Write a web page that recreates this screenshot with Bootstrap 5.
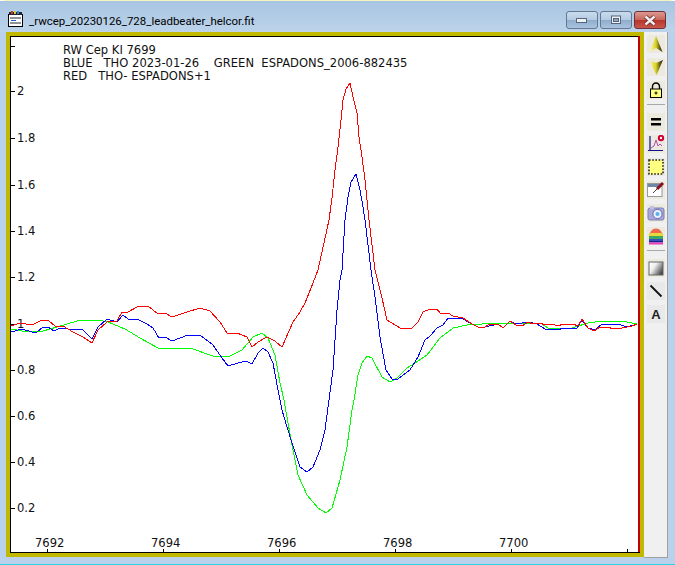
<!DOCTYPE html>
<html lang="en">
<head>
<meta charset="UTF-8">
<title>_rwcep_20230126_728_leadbeater_helcor.fit</title>
<link href="https://cdn.jsdelivr.net/npm/bootstrap@5.3.2/dist/css/bootstrap.min.css" rel="stylesheet">
<style>
html, body { width: 675px; height: 565px; margin: 0; overflow: hidden; background: #fff; }
.app-window { width: 675px; height: 565px; background: #b9d1ea; border-top: 1px solid #f5f2c0; border-bottom: 1px solid #2ad4e4; border-radius: 6px 6px 0 0; }
.title-bar { height: 31px; padding: 10px 9px 0 8px; background: linear-gradient(#a8c5e2, #bcd3ea); font: 11.45px Roboto, "Liberation Sans", sans-serif; color: #000; }
.title-bar .name { margin-left: 6px; margin-top: 3px; }
.win-btn { width: 32px; height: 18px; margin-left: 2px; border: 1px solid #66778f; border-radius: 3px; background: linear-gradient(#c9dcee 0, #b5cbe2 48%, #8fadcc 52%, #a9c4df 100%); }
.win-btn.close { background: linear-gradient(#dc9a90 0, #c9675c 48%, #b8352c 52%, #c8574c 100%); border-color: #70303a; }
.win-body { height: 524px; }
.plot-frame { width: 638px; height: 525px; margin-left: 6px; border: 4px solid #c1b800; background: #fff; }
.plot-frame svg { display: block; }
.plot-frame text { font: 11.55px "DejaVu Sans", "Liberation Sans", sans-serif; fill: #111; white-space: pre; }
.toolbar { width: 24px; height: 526px; background: #f0f0f0; border-right: 1px solid #a0a0a0; border-bottom: 1px solid #a0a0a0; padding-top: 3px; }
.tool { width: 18px; height: 18px; margin-bottom: 5px; background: #ece9de; }
.tool.plain { background: #e9e9e9; }
.tool.tight { margin-bottom: 4px; }
.tool svg { display: block; }
.tool-sep { width: 18px; height: 1px; background: #a8a8a8; margin-bottom: 8px; }
</style>
</head>
<body>
<div class="app-window">
  <div class="title-bar d-flex align-items-start">
    <svg width="15" height="16" viewBox="0 0 15 16">
      <rect x=".5" y="3.5" width="14" height="12" fill="#fff" stroke="#000"/>
      <rect x="1" y="1" width="13" height="3" fill="#223"/>
      <rect x="3" y="0" width="2" height="3" fill="#c33"/><rect x="6" y="0" width="2" height="3" fill="#cc3"/><rect x="9" y="0" width="2" height="3" fill="#38c"/>
      <path d="M2 7h11M2 12h11" stroke="#223"/><path d="M3 9.5h5" stroke="#26c"/>
    </svg>
    <div class="name flex-grow-1">_rwcep_20230126_728_leadbeater_helcor.fit</div>
    <div class="win-btn d-flex align-items-center justify-content-center"><svg width="12" height="6" viewBox="0 0 12 6"><rect x=".5" y="1.5" width="10" height="4" fill="#eef1f5" stroke="#56657a"/></svg></div>
    <div class="win-btn d-flex align-items-center justify-content-center"><svg width="12" height="10" viewBox="0 0 12 10"><rect x="1.5" y="1" width="9" height="7.5" fill="#eef1f5" stroke="#56657a"/><rect x="3.5" y="3.5" width="5" height="3" fill="#8fa6c0" stroke="#56657a"/></svg></div>
    <div class="win-btn close d-flex align-items-center justify-content-center"><svg width="14" height="11" viewBox="0 0 14 11"><path d="M2.5 1.5l9 8M11.5 1.5l-9 8" stroke="#5b2a2a" stroke-width="4"/><path d="M2.5 1.5l9 8M11.5 1.5l-9 8" stroke="#f4eeee" stroke-width="2.4"/></svg></div>
  </div>
  <div class="win-body d-flex">
    <div class="plot-frame">
      <svg width="630" height="517" viewBox="10 36 630 517">
        <path d="M10.5 36V553M10 552.5H640" stroke="#000" fill="none" shape-rendering="crispEdges" stroke-width="1.5"/>
        <path d="M10 36.5H639" stroke="#000" shape-rendering="crispEdges"/>
        <path d="M638.5 36V552" stroke="#c00000" stroke-width="2" shape-rendering="crispEdges"/>
        <path d="M11 46.5h4M11 91.5h4M11 138.5h4M11 185.5h4M11 231.5h4M11 277.5h4M11 324.5h4M11 370.5h4M11 416.5h4M11 462.5h4M11 508.5h4M47.5 549v4M163.5 549v4M279.5 549v4M395.5 549v4M511.5 549v4M627.5 549v4" stroke="#000" shape-rendering="crispEdges"/>
        <text x="63" y="54">RW Cep KI 7699</text>
        <text x="63" y="67">BLUE   THO 2023-01-26    GREEN  ESPADONS_2006-882435</text>
        <text x="63" y="80">RED   THO- ESPADONS+1</text>
        <text x="17" y="95">2</text><text x="17" y="142">1.8</text><text x="17" y="189">1.6</text><text x="17" y="235">1.4</text><text x="17" y="281">1.2</text><text x="17" y="328">1</text><text x="17" y="374">0.8</text><text x="17" y="420">0.6</text><text x="17" y="466">0.4</text><text x="17" y="512">0.2</text>
        <text x="35" y="547">7692</text><text x="151" y="547">7694</text><text x="267" y="547">7696</text><text x="383" y="547">7698</text><text x="499" y="547">7700</text>
        <g fill="none" shape-rendering="crispEdges">
          <polyline stroke="#00ff00" points="11,329 28,332 43,331 57,327 77,321 98,320 108,322 125,329 140,338 158,348 190,348 213,356 230,356 242,350 253,337 262,333 268,338 275,355 280,383 284,400 288,423 293,450 298,475 307,495 318,508 326,513 332,508 340,480 347,447 352,410 354,400 358,375 362,363 367,356 372,358 382,377 390,382 397,378 407,368 418,361 427,355 440,338 453,328 467,325 498,323 530,323 542,324 548,328 572,328 588,323 602,321 622,321 637,324"/>
          <polyline stroke="#0000ff" points="11,332 22,329 32,332 37,332 43,327 48,327 54,331 60,328 68,329 83,330 92,339 98,327 107,319 117,322 123,315 128,319 137,319 147,324 153,328 159,338 165,337 172,341 180,338 188,335 200,335 213,345 222,358 228,366 238,363 246,361 252,364 258,353 263,348 268,352 273,363 278,390 282,410 287,427 292,443 297,458 300,467 307,472 313,467 320,450 325,430 329,400 333,370 337,310 340,280 342,270 345,220 348,197 351,182 356,174 360,190 363,207 365,220 371,270 375,297 380,337 386,370 392,379 398,379 410,370 418,357 425,340 430,336 437,328 443,325 448,318 463,319 472,324 478,327 485,327 498,324 503,328 510,321 516,324 522,323 528,322 537,324 545,329 558,330 563,328 577,328 582,320 588,328 595,330 602,324 618,324 627,327 637,324"/>
          <polyline stroke="#ff0000" points="11,326 20,323 32,325 42,320 48,320 55,326 63,326 73,332 83,337 92,343 98,330 107,322 117,321 122,312 128,312 137,307 148,306 158,314 165,313 172,317 187,312 200,308 210,311 220,322 227,333 237,333 247,337 252,347 258,342 267,337 275,341 282,347 293,322 300,312 305,303 313,283 318,270 329,220 332,198 335,170 338,147 341,120 343,100 346,89 350,83 353,97 357,113 359,137 362,157 365,180 369,220 375,270 382,298 387,320 400,328 412,328 418,322 423,312 430,309 437,309 440,313 448,313 453,316 463,318 472,324 478,327 485,327 490,324 498,324 503,328 510,321 516,325 522,326 528,322 533,324 540,323 545,325 552,324 558,326 563,324 573,324 578,326 582,319 588,328 594,331 600,327 608,327 613,329 622,328 627,327 632,326 637,324"/>
        </g>
      </svg>
    </div>
    <div class="toolbar d-flex flex-column align-items-center">
      <div class="tool"><svg width="18" height="18" viewBox="0 0 18 18"><defs><linearGradient id="gold" x1="0" x2="1" y1="0" y2="0"><stop offset="0" stop-color="#fffcc0"/><stop offset=".5" stop-color="#d8d020"/><stop offset=".8" stop-color="#5a5210"/><stop offset="1" stop-color="#26240a"/></linearGradient></defs><path d="M9 1L15.5 17 9 13 2.5 17Z" fill="url(#gold)"/></svg></div>
      <div class="tool"><svg width="18" height="18" viewBox="0 0 18 18"><path d="M2 2L9 5 16 2 9.5 17Z" fill="url(#gold)"/></svg></div>
      <div class="tool"><svg width="18" height="18" viewBox="0 0 18 18"><path d="M5.5 8V5.5a3.5 3.5 0 0 1 7 0V8" fill="none" stroke="#000" stroke-width="1.4"/><rect x="3.5" y="8" width="11" height="8.5" fill="#ffff80" stroke="#000"/><path d="M9 10.5v3M7.5 12h3" stroke="#000"/></svg></div>
      <div class="tool-sep"></div>
      <div class="tool tight"><svg width="18" height="18" viewBox="0 0 18 18"><path d="M4 5h10v2.5H4zM4 10h10v2.5H4z" fill="#000"/></svg></div>
      <div class="tool"><svg width="18" height="18" viewBox="0 0 18 18"><path d="M3 1v15M1 15.5h15" stroke="#12128a" stroke-width="1.2" fill="none"/><path d="M4 13l3-2 2-6 2 6 2-2 2 2" stroke="#b050b0" fill="none"/><circle cx="14" cy="3" r="2.2" fill="#fff" stroke="#d00030" stroke-width="2"/></svg></div>
      <div class="tool"><svg width="18" height="18" viewBox="0 0 18 18"><rect x="2" y="2" width="14" height="14" fill="#ffff80" stroke="#222" stroke-width="1.6" stroke-dasharray="1.6 1.6"/></svg></div>
      <div class="tool"><svg width="18" height="18" viewBox="0 0 18 18"><rect x=".5" y="2.5" width="14.5" height="13" fill="#fff" stroke="#999"/><rect x="1" y="3" width="13.5" height="3" fill="#6f88a8"/><path d="M10 8l6-6" stroke="#8a1020" stroke-width="3"/><path d="M6 12l4-4" stroke="#444"/></svg></div>
      <div class="tool"><svg width="18" height="18" viewBox="0 0 18 18"><rect x="1" y="4" width="16" height="12" rx="2" fill="#a8a8d8" stroke="#8080b0"/><rect x="3" y="2" width="4" height="3" fill="#c0c0e0"/><circle cx="10.5" cy="10" r="4.6" fill="#e8f0ff" stroke="#6a6ab0"/><circle cx="10.5" cy="10" r="2" fill="#58b0e8"/></svg></div>
      <div class="tool"><svg width="18" height="18" viewBox="0 0 18 18"><path d="M2 10a7 8.5 0 0 1 14 0z" fill="#f06a50"/><path d="M2.5 6h13l.5 3H2z" fill="#e8d840"/><rect x="2" y="9" width="14" height="3" fill="#40a860"/><rect x="2" y="12" width="14" height="2" fill="#3050c0"/><rect x="2" y="14" width="14" height="1.5" fill="#202088"/><rect x="2" y="15.5" width="14" height="2" fill="#e840c0"/></svg></div>
      <div class="tool-sep"></div>
      <div class="tool"><svg width="18" height="18" viewBox="0 0 18 18"><defs><linearGradient id="shade" x1="0" x2="1" y1=".2" y2=".8"><stop offset="0" stop-color="#fff"/><stop offset=".35" stop-color="#eee"/><stop offset="1" stop-color="#3a3a3a"/></linearGradient></defs><rect x="2" y="3" width="14" height="13" fill="url(#shade)" stroke="#666"/></svg></div>
      <div class="tool plain"><svg width="18" height="18" viewBox="0 0 18 18"><path d="M3.5 3.5l11 11" stroke="#111" stroke-width="1.8"/></svg></div>
      <div class="tool plain"><svg width="18" height="18" viewBox="0 0 18 18"><text x="9" y="14" text-anchor="middle" style="font: bold 13px 'Liberation Sans', sans-serif; fill: #222">A</text></svg></div>
    </div>
  </div>
</div>
<script src="https://cdn.jsdelivr.net/npm/bootstrap@5.3.2/dist/js/bootstrap.bundle.min.js"></script>
</body>
</html>
